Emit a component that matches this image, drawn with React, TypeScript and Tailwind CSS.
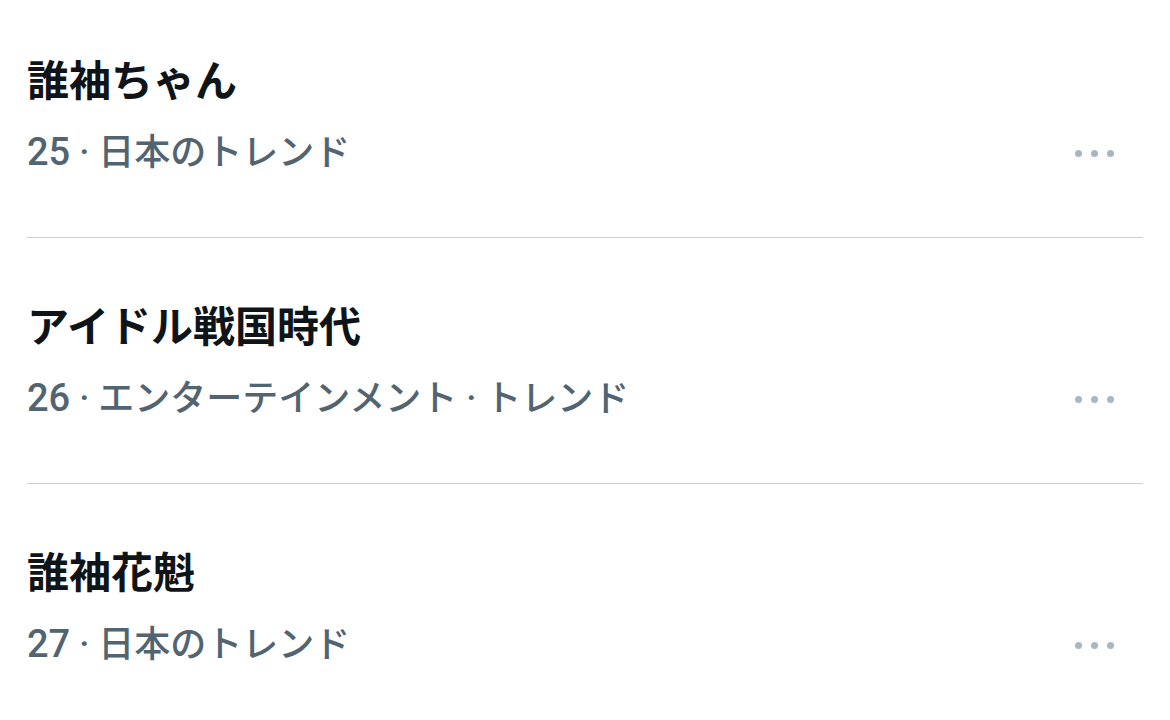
const trends = [
  { rank: 25, title: "誰袖ちゃん", meta: "日本のトレンド" },
  { rank: 26, title: "アイドル戦国時代", meta: "エンターテインメント · トレンド" },
  { rank: 27, title: "誰袖花魁", meta: "日本のトレンド" },
];

function MoreDots() {
  return (
    <div className="flex items-center gap-[9px] pr-[2px]">
      <span className="h-[7px] w-[7px] rounded-full bg-[#a9b7c1]" />
      <span className="h-[7px] w-[7px] rounded-full bg-[#a9b7c1]" />
      <span className="h-[7px] w-[7px] rounded-full bg-[#a9b7c1]" />
    </div>
  );
}

export default function App() {
  return (
    <div
      className="h-[720px] w-[1170px] overflow-hidden bg-white"
      style={{ fontFamily: '"Liberation Sans", "Noto Sans CJK JP", sans-serif' }}
    >
      <div className="-mt-2 px-[27px]">
        {trends.map((t, i) => (
          <div
            key={t.rank}
            className={
              "flex h-[246px] items-start justify-between pt-[61px] " +
              (i < trends.length - 1 ? "border-b border-[#cfcfcf]" : "")
            }
          >
            <div className="flex flex-col">
              <h2 className="text-[42px] leading-[57px] font-bold text-[#0f1419]">{t.title}</h2>
              <p
                className="mt-[22px] text-[36px] leading-[40px] font-medium text-[#536471]"
                style={{ fontFamily: 'Roboto, "Noto Sans CJK JP", sans-serif' }}
              >
                <span className="text-[38px]">{t.rank}</span> · {t.meta.replace(" · ", "  ·  ")}
              </p>
            </div>
            <div className="mt-[97px] pr-[27px]">
              <MoreDots />
            </div>
          </div>
        ))}
      </div>
    </div>
  );
}
